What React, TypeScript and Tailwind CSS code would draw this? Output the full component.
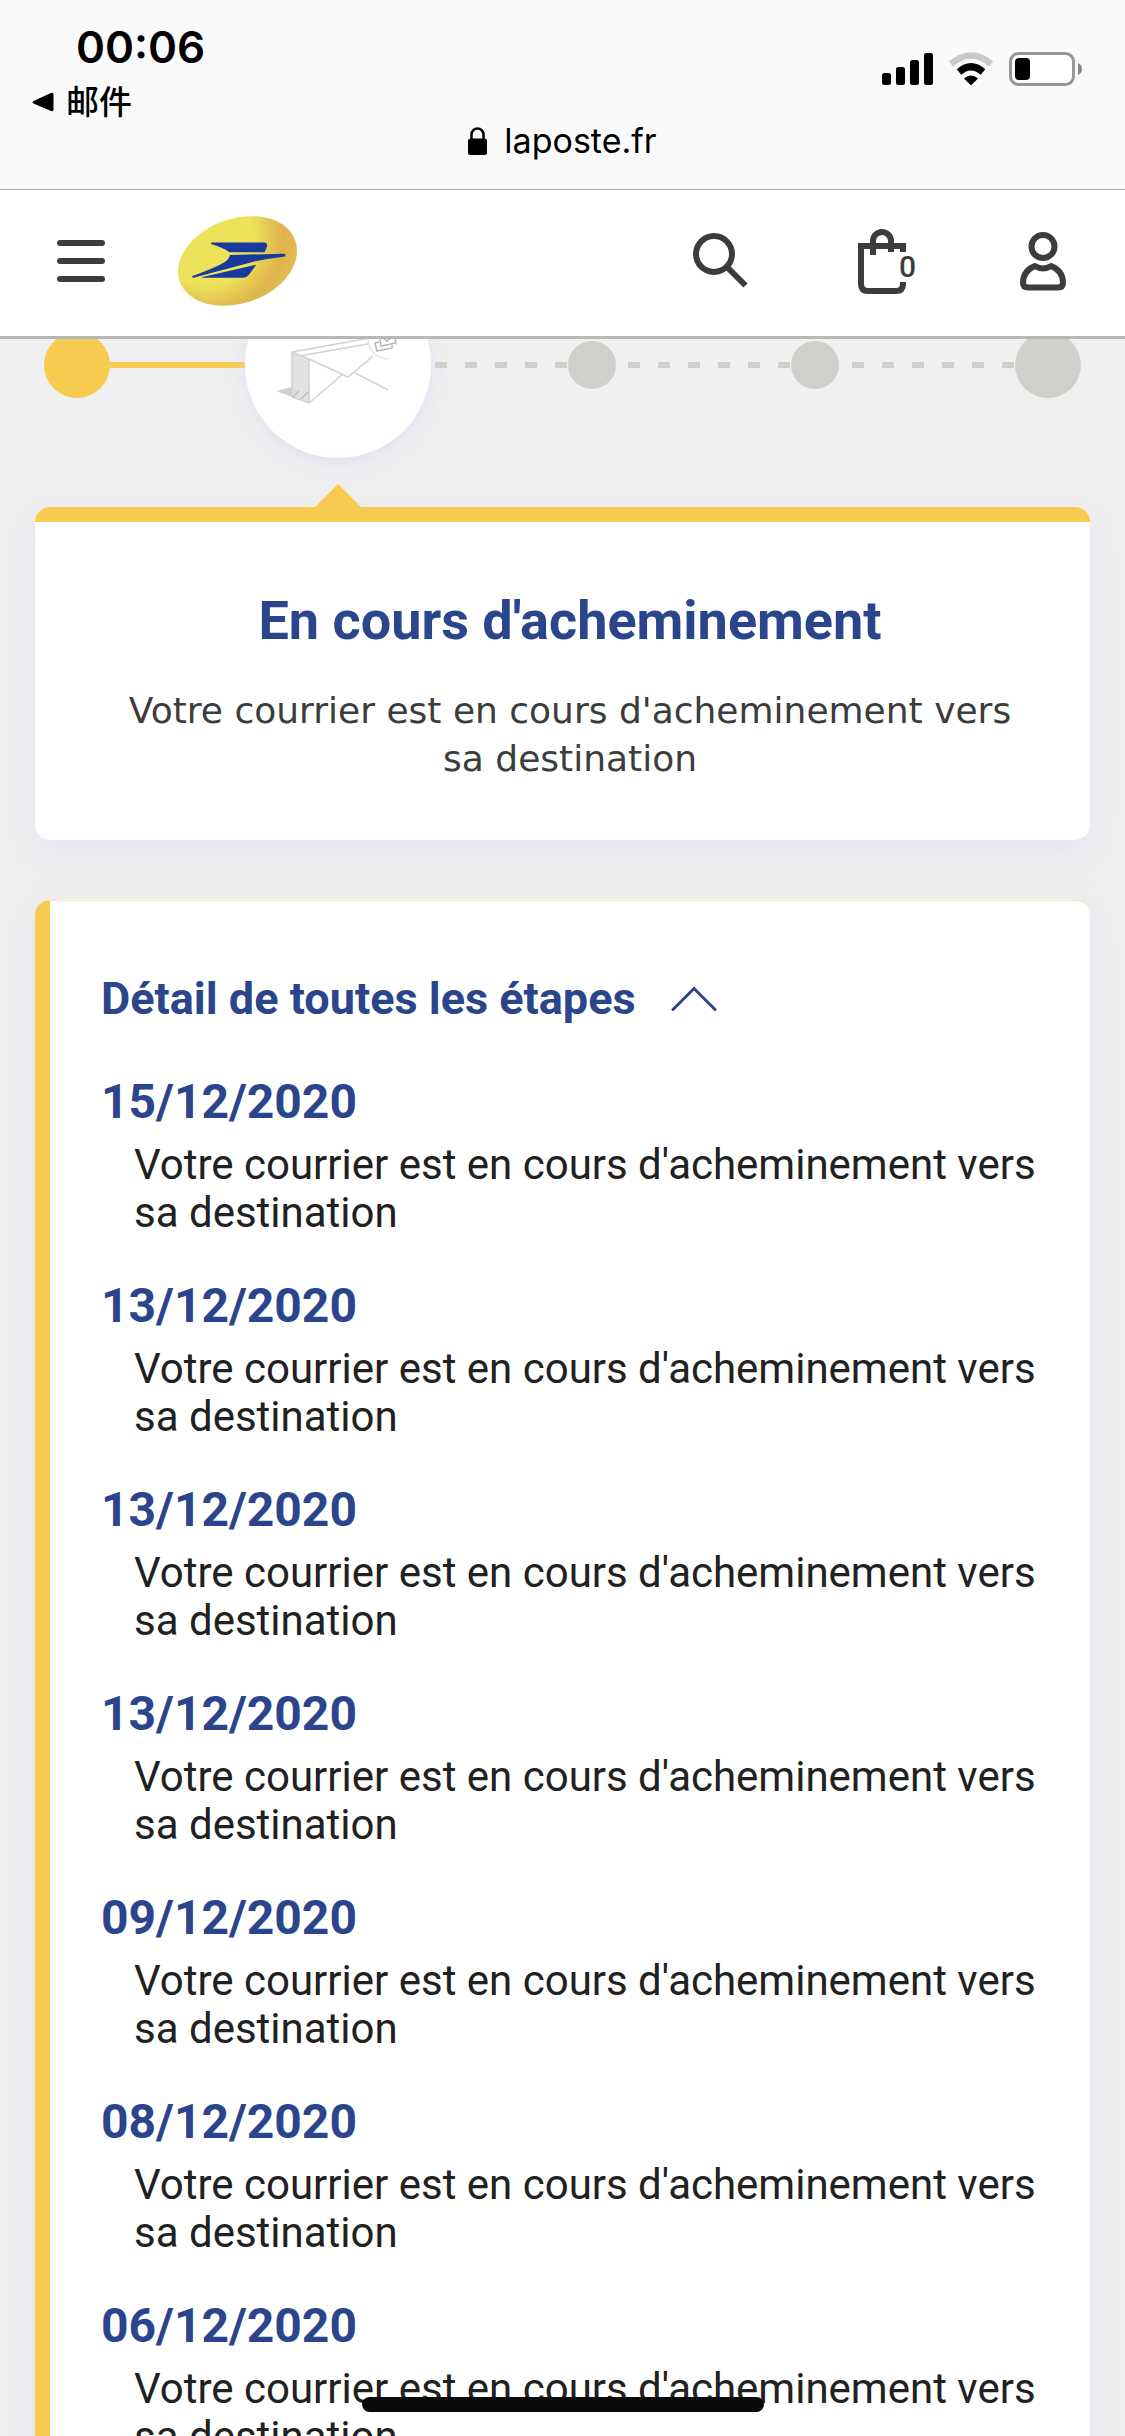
const steps = [
  { date: "15/12/2020", label: "Votre courrier est en cours d'acheminement vers sa destination" },
  { date: "13/12/2020", label: "Votre courrier est en cours d'acheminement vers sa destination" },
  { date: "13/12/2020", label: "Votre courrier est en cours d'acheminement vers sa destination" },
  { date: "13/12/2020", label: "Votre courrier est en cours d'acheminement vers sa destination" },
  { date: "09/12/2020", label: "Votre courrier est en cours d'acheminement vers sa destination" },
  { date: "08/12/2020", label: "Votre courrier est en cours d'acheminement vers sa destination" },
  { date: "06/12/2020", label: "Votre courrier est en cours d'acheminement vers sa destination" },
];

function StatusBar() {
  return (
    <div className="border-b border-[#adadad] bg-[#fafafa] font-[Inter,'Noto_Sans_CJK_SC',sans-serif] text-black">
      <div className="flex h-[120px] items-start justify-between pt-5 pr-[42px] pl-8">
        <div>
          <div className="pl-11 text-[44px] leading-[54px] font-semibold">00:06</div>
          <button type="button" className="flex items-center gap-3 text-[33px] leading-[56px] font-medium">
            <svg width="22" height="20" viewBox="0 0 22 20" aria-hidden="true">
              <path d="M1.5 9 19 1q2.500-1 2.500 1.500v15q0 2.500-2.500 1.500L1.500 11.500q-2-1.200 0-2.500Z" />
            </svg>
            邮件
          </button>
        </div>
        <div className="flex items-center gap-[15px] pt-8">
          <svg width="51" height="34" viewBox="0 0 51 34" aria-hidden="true">
            <rect x="0" y="21" width="9" height="12" rx="2.500" />
            <rect x="14" y="15" width="9" height="18" rx="2.500" />
            <rect x="28" y="8" width="9" height="25" rx="2.500" />
            <rect x="42" y="1" width="9" height="32" rx="2.500" />
          </svg>
          <svg width="46" height="34" viewBox="0 0 46 34" fill="none" aria-hidden="true">
            <path d="M3 12Q23-5 43 12" stroke="#c9c9c9" strokeWidth="6.500" />
            <path d="M11 20Q23 9.500 35 20" stroke="#000" strokeWidth="7" />
            <path d="M16 26.500Q23 20.500 30 26.500L23.700 32.700q-.7.6-1.400 0Z" fill="#000" />
          </svg>
          <svg width="74" height="34" viewBox="0 0 74 34" aria-hidden="true">
            <rect x="1.500" y="1.500" width="63" height="31" rx="8" fill="#fff" stroke="#979797" strokeWidth="3" />
            <rect x="6" y="6" width="15" height="22" rx="4" />
            <path d="M69 11q4 2 4 6t-4 6Z" fill="#858585" />
          </svg>
        </div>
      </div>
      <div className="flex h-[42px] items-center justify-center gap-4 text-[34px] leading-[42px]">
        <svg width="20" height="28" viewBox="0 0 20 28" aria-hidden="true">
          <rect x="0" y="11.500" width="19" height="16.500" rx="2.500" />
          <path d="M3.500 13V7.500a6 6 0 0 1 12 0V13" fill="none" stroke="#000" strokeWidth="2.500" />
        </svg>
        <span>laposte.fr</span>
      </div>
      <div className="h-[27px]" />
    </div>
  );
}

function Logo() {
  return (
    <svg width="119" height="90" viewBox="0 0 356 268" aria-hidden="true">
      <defs>
        <radialGradient id="oval" gradientUnits="userSpaceOnUse" cx="85" cy="65" r="280">
          <stop offset="0.5" stopColor="#ede35b" />
          <stop offset="0.68" stopColor="#e5c653" />
          <stop offset="0.82" stopColor="#e0b34e" />
          <stop offset="1" stopColor="#e3bd52" />
        </radialGradient>
      </defs>
      <path
        fill="url(#oval)"
        d="M0 165C0 85 100 0 222 0C300 0 356 42 356 103C356 185 255 268 134 268C56 268 0 226 0 165Z"
      />
      <g fill="#173a9c">
        <path d="M100 79H258q11 1 8 12l-7 17H154Q140 96 101 84q-4-3-1-5Z" />
        <path d="M155 116 317 112q5 1 5 5t-5 4Q270 125 226 136L46 184q-5 0-3-5Q95 161 128 144 155 130 155 116Z" />
        <path d="M73 182 234 145q-11 17-22 30-7 9-17 9H73Z" />
      </g>
    </svg>
  );
}

function NavBar() {
  return (
    <nav className="flex h-[149px] items-center justify-between border-b-[3px] border-[#b7b7b7] bg-white pr-[59px] pb-1 pl-[57px] text-[#3c3c3c]">
      <div className="flex items-center gap-[73px]">
        <button type="button" aria-label="Menu" className="flex w-12 flex-col gap-3">
          <span className="h-[6px] rounded-full bg-[#3c3c3c]" />
          <span className="h-[6px] rounded-full bg-[#3c3c3c]" />
          <span className="h-[6px] rounded-full bg-[#3c3c3c]" />
        </button>
        <a href="#accueil" aria-label="La Poste">
          <Logo />
        </a>
      </div>
      <div className="flex items-center gap-[104px]">
        <button type="button" aria-label="Rechercher">
          <svg width="62" height="56" viewBox="0 0 62 56" fill="none" stroke="currentColor" strokeWidth="6">
            <circle cx="22" cy="21" r="18" />
            <path d="M35 34 53.500 52.500" />
          </svg>
        </button>
        <button type="button" aria-label="Panier" className="relative">
          <svg width="58" height="67" viewBox="0 0 58 67" fill="none" stroke="currentColor" strokeWidth="6">
            <path d="M45 24V18H3V56q0 7 7 7H38q7 0 7-7V54" />
            <path d="M15 27V13a9 9 0 0 1 18 0V24" />
          </svg>
          <span className="absolute right-0 bottom-3 font-[Roboto,sans-serif] text-[30px] leading-8 font-medium">0</span>
        </button>
        <button type="button" aria-label="Mon compte">
          <svg width="46" height="60" viewBox="0 0 46 60" fill="none" stroke="currentColor" strokeWidth="6">
            <circle cx="23" cy="15.500" r="11.500" />
            <path d="M15 35Q3 40 3 51.500q0 5 5 5H38q5 0 5-5Q43 40 31 35 23 40 15 35Z" strokeLinejoin="round" />
          </svg>
        </button>
      </div>
    </nav>
  );
}

function Envelope() {
  return (
    <svg width="186" height="186" viewBox="0 0 186 186" fill="none" stroke="#d2d2d2" strokeWidth="1.500" aria-hidden="true">
      <path d="M31 119 47 115V125L64 131Z" fill="#cfcfcf" stroke="none" />
      <path d="M47 80 64 87V131L47 125Z" fill="#e2e2e2" />
      <path d="M47 80 125 66M54 84 123 72" />
      <path d="M64 87 103 105 128 84M64 131 98 102M110 101 143 118" />
      <path d="M48 125 54 119M56 127 63 120" stroke="#bdbdbd" />
      <path d="M123 68Q125 86 143 87" stroke="#e3e3e3" />
      <path d="M134 70 130 71 132 79 147 76V73" stroke="#b5b5b5" />
      <path d="M134 62 136 74 151 71 149 60M138 66 142 69 147 65" stroke="#b5b5b5" />
    </svg>
  );
}

function Stepper() {
  return (
    <div className="-mt-[67px] flex items-center px-11">
      <div className="size-[66px] rounded-full bg-[#f7cb50]" />
      <div className="h-[6px] flex-31 bg-[#f7cb50]" />
      <div className="relative size-[186px] rounded-full bg-white shadow-[0_6px_20px_rgba(210,210,245,0.5)]">
        <Envelope />
        {/* pointer to the card of the current step */}
        <div className="absolute top-[212px] left-1/2 -translate-x-1/2 border-x-[23px] border-b-[23px] border-x-transparent border-b-[#f7cb50]" />
      </div>
      <div className="mr-px h-[6px] flex-31 bg-[repeating-linear-gradient(to_left,#cfd0cb_0_12px,transparent_12px_30px)]" />
      <div className="size-12 rounded-full bg-[#cfd0cb]" />
      <div className="mr-px h-[6px] flex-40 bg-[repeating-linear-gradient(to_left,#cfd0cb_0_12px,transparent_12px_30px)]" />
      <div className="size-12 rounded-full bg-[#cfd0cb]" />
      <div className="mr-px h-[6px] flex-40 bg-[repeating-linear-gradient(to_left,#cfd0cb_0_12px,transparent_12px_30px)]" />
      <div className="size-[66px] rounded-full bg-[#cfd0cb]" />
    </div>
  );
}

export default function App() {
  return (
    <div className="relative h-screen overflow-hidden bg-[#f0f0f0] font-[Roboto,sans-serif]">
      <header className="relative z-10">
        <StatusBar />
        <NavBar />
      </header>
      <main>
        <Stepper />
        <section className="mx-[35px] mt-[49px] rounded-[15px] border-t-[15px] border-[#f7cb50] bg-white pt-[66px] pr-[75px] pb-[57px] pl-[90px] text-center shadow-[0_12px_30px_rgba(215,215,245,0.5)]">
          <h1 className="text-[54px] leading-[66px] font-bold text-[#2a458c]">En cours d'acheminement</h1>
          <p className="mt-[33px] font-[Verdana,'DejaVu_Sans',sans-serif] text-[36px] leading-[48px] text-[#3c3c3c]">
            Votre courrier est en cours d'acheminement vers sa destination
          </p>
        </section>
        <section className="mx-[35px] mt-[60px] rounded-[15px] border-t border-l-[15px] border-t-[#f8e7ae] border-l-[#f7cb50] bg-white pt-[71px] pr-10 pb-[60px] pl-[51px] shadow-[0_12px_30px_rgba(215,215,245,0.5)]">
          <button type="button" className="flex items-center gap-[35px] text-[45px] leading-[54px] font-bold text-[#2a458c]">
            Détail de toutes les étapes
            <svg width="46" height="26" viewBox="0 0 46 26" fill="none" stroke="currentColor" strokeWidth="3" strokeLinecap="round" aria-hidden="true">
              <path d="M2 23.500 23 2.500 44 23.500" />
            </svg>
          </button>
          <ul className="mt-[46px] flex flex-col gap-[39px]">
            {steps.map((step, i) => (
              <li key={i}>
                <h2 className="text-[48px] leading-[60px] font-bold text-[#2a458c]">{step.date}</h2>
                <p className="mt-[9px] pl-[33px] text-[42px] leading-[48px] text-[#212121]">{step.label}</p>
              </li>
            ))}
          </ul>
        </section>
      </main>
      {/* home indicator */}
      <div className="absolute bottom-6 left-1/2 z-10 h-[15px] w-[402px] -translate-x-1/2 rounded-full bg-[#0a0a0a]" />
    </div>
  );
}
